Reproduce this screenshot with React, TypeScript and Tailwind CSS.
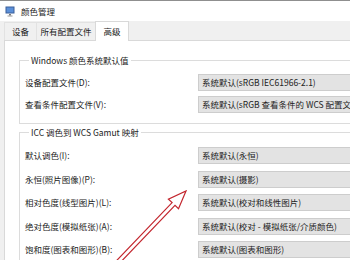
import React from 'react';

const windowsRows = [
  { label: '设备配置文件(D):', value: '系统默认(sRGB IEC61966-2.1)' },
  { label: '查看条件配置文件(V):', value: '系统默认(sRGB 查看条件的 WCS 配置文件)' },
];

const iccRows = [
  { label: '默认调色(I):', value: '系统默认(永恒)' },
  { label: '永恒(照片图像)(P):', value: '系统默认(摄影)' },
  { label: '相对色度(线型图片)(L):', value: '系统默认(校对和线性图片)' },
  { label: '绝对色度(模拟纸张)(A):', value: '系统默认(校对 - 模拟纸张/介质颜色)' },
  { label: '饱和度(图表和图形)(B):', value: '系统默认(图表和图形)' },
];

function Row({ label, value }: { label: string; value: string }) {
  return (
    <div className="flex items-center h-[17px]">
      <div className="w-[173px] shrink-0 whitespace-nowrap">{label}</div>
      <div className="w-[200px] shrink-0 h-[17px] flex items-center pl-[3px] bg-[#e3e3e3] border border-[#cdcdcd] whitespace-nowrap overflow-hidden">
        {value}
      </div>
    </div>
  );
}

function GroupBox({
  title,
  rows,
  className,
  rowsClass,
}: {
  title: string;
  rows: { label: string; value: string }[];
  className: string;
  rowsClass: string;
}) {
  return (
    <fieldset className={`ml-[14px] w-[340px] border border-[#dcdcdc] pl-[5px] ${className}`}>
      <legend className="ml-[4px] px-[2px] leading-[12px]">{title}</legend>
      <div className={`flex flex-col ${rowsClass}`}>
        {rows.map((r) => (
          <Row key={r.label} label={r.label} value={r.value} />
        ))}
      </div>
    </fieldset>
  );
}

export default function App() {
  return (
    <div className="relative w-[350px] h-[260px] overflow-hidden bg-white text-[8.5px] text-[#222] font-['Noto_Sans_CJK_SC',sans-serif]">
      {/* title bar */}
      <div className="h-[21px] border-t border-[#8f8f8f] flex items-center pl-[5px] gap-[6px]">
        <svg width="10" height="11" viewBox="0 0 10 11">
          <rect x="0.5" y="0.5" width="9" height="7" fill="#3b5f9a" />
          <rect x="1.5" y="1.5" width="7" height="5" fill="#5b8fd8" />
          <rect x="4" y="8" width="2" height="1.5" fill="#7a7a7a" />
          <rect x="2.5" y="9.5" width="5" height="1" fill="#9a9a9a" />
        </svg>
        <span className="text-[8.5px] leading-none">颜色管理</span>
      </div>

      <div className="flex h-[239px]">
        <div className="w-[2px] bg-[#a6a6a6]" />
        <div className="flex-1 flex flex-col bg-[#f0f0f0] pl-[4px]">
          {/* tabs */}
          <div className="h-[24px] flex items-end">
            <div className="w-[32px] h-[18px] flex items-center justify-center border-t border-l border-[#e2e2e2]">设备</div>
            <div className="w-[59px] h-[18px] flex items-center justify-center border-t border-l border-[#e2e2e2]">所有配置文件</div>
            <div className="w-[34px] h-[20px] -mb-px z-10 flex items-center justify-center bg-white border-t border-x border-[#d9d9d9]">高级</div>
          </div>

          {/* panel */}
          <div className="flex-1 bg-white border-t border-l border-[#d9d9d9] pt-[13px]">
            <GroupBox
              title="Windows 颜色系统默认值"
              rows={windowsRows}
              className="pt-[8px] pb-[10px]"
              rowsClass="gap-[5px]"
            />
            <GroupBox
              title="ICC 调色到 WCS Gamut 映射"
              rows={iccRows}
              className="mt-[2px] pt-[9px] pb-[10px]"
              rowsClass="gap-[6.5px]"
            />
          </div>
        </div>
      </div>

      {/* annotation arrow */}
      <svg className="absolute left-0 top-0 pointer-events-none" width="350" height="260" viewBox="0 0 350 260">
        <polygon
          points="186,191 178.5,208.8 175,205.4 119.4,263.4 116.6,260.6 172.1,202.6 168.4,199.2"
          fill="none"
          stroke="#c3262e"
          strokeWidth="1.2"
          strokeLinejoin="miter"
        />
      </svg>
    </div>
  );
}
